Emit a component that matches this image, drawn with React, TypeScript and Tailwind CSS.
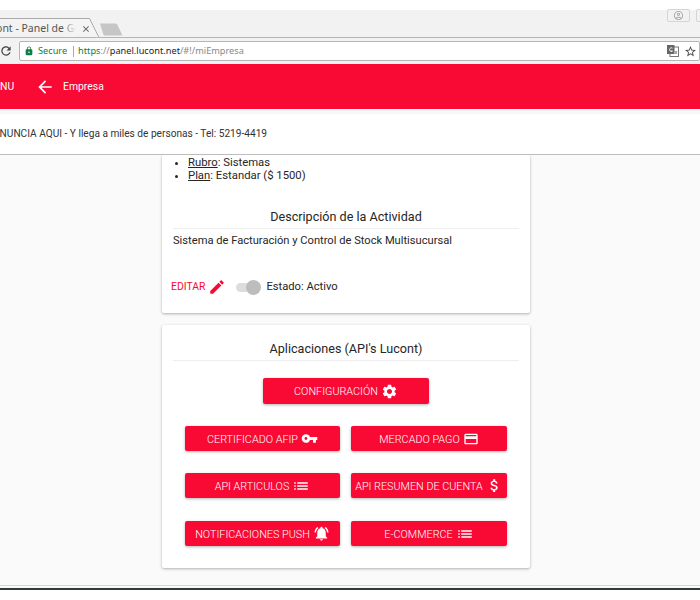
import React from "react";
import {
  MdArrowBack, MdAttachMoney, MdCreditCard, MdEdit, MdList, MdLock, MdNotificationsActive,
  MdOutlineAccountCircle, MdRefresh, MdSettings, MdStarBorder, MdVpnKey, MdClose,
} from "react-icons/md";

function Btn({ label, icon, className = "" }: { label: string; icon: React.ReactNode; className?: string }) {
  return (
    <div className={`flex h-[25px] items-center justify-center gap-[3px] rounded-[2px] bg-[#f90a35] text-[10.8px] font-light text-white shadow-[0_1px_3px_rgba(0,0,0,0.3)] ${className}`}>
      <span className="pt-[3px]">{label}</span>
      {icon}
    </div>
  );
}

function Translate() {
  return (
    <svg width="12" height="12" viewBox="0 0 12 12" className="shrink-0">
      <rect x="3" y="2" width="8.5" height="9.5" fill="#fff" stroke="#777" strokeWidth="1" />
      <rect x="0" y="0" width="7.5" height="9" fill="#666" />
      <path d="M5.5 3.2A1.8 1.8 0 1 0 5.5 6H3.8" fill="none" stroke="#fff" strokeWidth="0.9" />
      <path d="M8 6l2 3M10 6L8 9" stroke="#777" strokeWidth="0.8" />
    </svg>
  );
}

export default function App() {
  return (
    <div className="flex h-[600px] w-[700px] flex-col overflow-hidden bg-white font-['Roboto',sans-serif] text-[#262626]">
      <div className="h-[10px] shrink-0 bg-white" />
      {/* Tab strip */}
      <div className="flex h-[28px] shrink-0 border-b border-[#b5b5b5] bg-[#f2f2f2] font-['Noto_Sans',sans-serif]">
        <div className="relative h-[28px] w-[101px] shrink-0 overflow-hidden">
          <svg width="101" height="28" viewBox="0 0 101 28" className="absolute inset-0">
            <path d="M-2 8.5H89.5L99 27.5" fill="#f4f4f4" stroke="#aaa" strokeWidth="1" />
          </svg>
          <div className="relative flex h-full items-center pt-[10px]">
            <div className="relative ml-[-21px] w-[97px] overflow-hidden text-[10.5px] whitespace-nowrap text-[#555]">
              Lucont - Panel de Gestión
              <div className="absolute top-0 right-0 h-full w-[14px] bg-gradient-to-r from-transparent to-[#f4f4f4]" />
            </div>
            <MdClose size={10} className="ml-[5px] shrink-0 text-[#555]" />
          </div>
        </div>
        <svg width="26" height="14" viewBox="0 0 26 14" className="mt-[13px] -ml-[2px] shrink-0">
          <path d="M1 0.5H16.5C17.5 .5 18 1 18.5 2L23.5 12.5H5.5C5 12.5 4.6 12.2 4.4 11.5Z" fill="#c6c6c6" />
        </svg>
        <div className="flex-1" />
        <div className="mt-[-1px] mr-[6px] flex h-[13px] w-[23px] items-center justify-center rounded-[2px] border border-[#d5d5d5]">
          <MdOutlineAccountCircle size={11} className="text-[#aaa]" />
        </div>
        <div className="mt-[-1px] mr-[-12px] h-[13px] w-[16px] rounded-[2px] border border-[#d5d5d5]" />
      </div>
      {/* Toolbar */}
      <div className="flex h-[26px] shrink-0 items-center bg-[#f2f2f2] font-['Noto_Sans',sans-serif]">
        <div className="flex w-[19px] shrink-0 justify-start">
          <MdRefresh size={14} className="ml-[-1px] text-[#444]" />
        </div>
        <div className="flex h-[20px] flex-1 items-center rounded-[2px] border border-[#b5b5b5] bg-white text-[9.2px]">
          <MdLock size={10} className="ml-[4px] shrink-0 text-[#0b8043]" />
          <span className="ml-[4px] text-[#0b8043]">Secure</span>
          <span className="ml-[6px] h-[11px] w-px bg-[#aaa]" />
          <span className="ml-[4px] text-[#0b8043]">https</span>
          <span className="text-[#888]">://</span>
          <span className="text-[#222]">panel.lucont.net</span>
          <span className="text-[#888]">/#!/miEmpresa</span>
          <div className="flex-1" />
          <Translate />
          <MdStarBorder size={13} className="mr-[2px] ml-[5px] shrink-0 text-[#444]" />
        </div>
      </div>
      {/* Red bar */}
      <div className="flex h-[45px] shrink-0 items-center bg-[#f90a35] text-[10.4px] text-white">
        <span className="ml-[-15px] w-[50px]">MENU</span>
        <MdArrowBack size={20} className="shrink-0" />
        <span className="ml-[8px]">Empresa</span>
      </div>
      <div className="h-[5px] shrink-0 bg-[#f7f7f7]" />
      {/* Banner */}
      <div className="flex h-[41px] shrink-0 items-center border-b border-[#bdbdbd] bg-white text-[10.15px] whitespace-nowrap text-[#333]">
        <span className="ml-[-7px]">ANUNCIA AQUI - Y llega a miles de personas - Tel: 5219-4419</span>
      </div>
      {/* Content */}
      <div className="flex h-[431px] shrink-0 flex-col items-center gap-[12px] overflow-hidden border-b border-[#d5d5d5] bg-[#fafafa] pr-[8px]">
        <div className="flex h-[158px] w-[368px] shrink-0 flex-col rounded-[2px] bg-white px-[11px] shadow-[0_1px_3px_rgba(0,0,0,0.3)]">
          <ul className="mt-[1px] list-disc pl-[15px] text-[11.3px] leading-[13px]">
            <li><u>Rubro</u>: Sistemas</li>
            <li><u>Plan</u>: Estandar ($ 1500)</li>
          </ul>
          <div className="mt-[25px] border-b border-[#eeeeee] pb-[2px] text-center text-[12.6px] leading-[19px]">Descripción de la Actividad</div>
          <div className="mt-[4px] text-[11.15px] leading-[16px]">Sistema de Facturación y Control de Stock Multisucursal</div>
          <div className="mt-[29px] flex items-center">
            <span className="ml-[-2px] text-[10.4px] text-[#f90a35]">EDITAR</span>
            <MdEdit size={18} className="ml-[3px] text-[#f90a35]" />
            <div className="relative ml-[10px] h-[9px] w-[22px] rounded-full bg-[#dddddd]">
              <div className="absolute top-[-3px] right-[-3px] h-[15px] w-[15px] rounded-full bg-[#bdbdbd]" />
            </div>
            <span className="ml-[8px] text-[11.2px]">Estado: Activo</span>
          </div>
        </div>
        <div className="h-[243px] w-[368px] shrink-0 rounded-[2px] bg-white px-[11px] pt-[14px] shadow-[0_1px_3px_rgba(0,0,0,0.3)]">
          <div className="border-b border-[#eeeeee] pb-[2px] text-center text-[12.6px] leading-[19px]">Aplicaciones (API's Lucont)</div>
          <div className="mt-[17px] flex justify-center">
            <Btn label="CONFIGURACIÓN" className="!h-[26px] w-[166px]" icon={<MdSettings size={17} />} />
          </div>
          <div className="mt-[22px] ml-[12px] grid w-[322px] grid-cols-[155px_156px] gap-x-[11px] gap-y-[22px]">
            <Btn label="CERTIFICADO AFIP" icon={<MdVpnKey size={17} />} />
            <Btn label="MERCADO PAGO" icon={<MdCreditCard size={16} />} />
            <Btn label="API ARTICULOS" icon={<MdList size={18} />} />
            <Btn label="API RESUMEN DE CUENTA" icon={<MdAttachMoney size={17} />} />
            <Btn label="NOTIFICACIONES PUSH" className="mt-[1px]" icon={<MdNotificationsActive size={17} />} />
            <Btn label="E-COMMERCE" className="mt-[1px]" icon={<MdList size={18} />} />
          </div>
        </div>
      </div>
      <div className="h-[2px] shrink-0 bg-[#fafafa]" />
      <div className="h-[2px] shrink-0 bg-[#333a3a]" />
      <div className="flex-1 bg-white" />
    </div>
  );
}
